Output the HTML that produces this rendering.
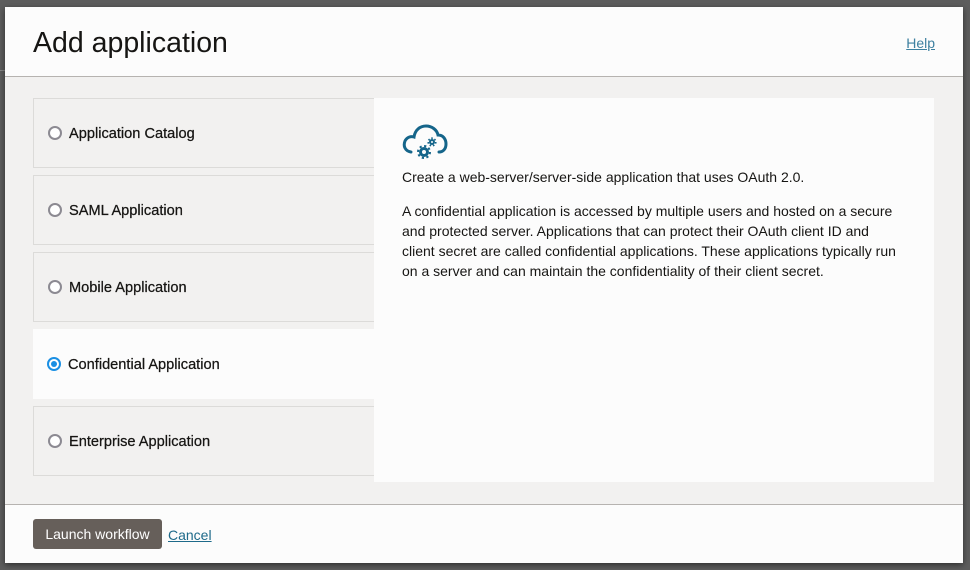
<!DOCTYPE html>
<html><head><meta charset="utf-8"><style>
*{box-sizing:border-box;margin:0;padding:0}
body{width:970px;height:570px;background:#5d5d5d;font-family:"Liberation Sans",sans-serif;position:relative;overflow:hidden;color:#161513}
.modal{position:absolute;left:5px;top:7px;width:958px;height:556px;background:#fcfcfc;box-shadow:0 2px 6px rgba(0,0,0,.5)}
.hdr{height:70px;border-bottom:1px solid #b6b3b0;position:relative}
.hdr h1{position:absolute;left:28px;top:20px;font-size:28.5px;font-weight:normal;color:#161513}
.help{position:absolute;right:28px;top:28px;font-size:14px;color:#3d80a0;text-decoration:underline}
.body{position:absolute;top:70px;left:0;width:958px;height:428px;background:#f2f1f0;border-bottom:1px solid #b6b3b0}
.item{position:absolute;left:28px;width:342px;height:70px;border:1px solid #dcdbd9;border-right:none;background:#f2f1f0;font-size:14.6px}
.item.sel{background:#fcfcfc;border-color:#fcfcfc}
.item span.r{position:absolute;left:14px;top:27px;width:14px;height:14px;border-radius:50%;border:2px solid #8c8a92;background:#fff}
.item.sel span.r{border-color:#1a8fe3;left:13px}
.item.sel span.r::after{content:"";position:absolute;left:2px;top:2px;width:6px;height:6px;border-radius:50%;background:#1a8fe3}
.item .t{position:absolute;left:35px;top:27px;-webkit-text-stroke:0.25px #161513}
.item.sel .t{left:34px}
.panel{position:absolute;left:369px;top:21px;width:560px;height:384px;background:#fcfcfc;font-size:14px;line-height:20px;color:#161513}
.ftr{position:absolute;top:498px;left:0;width:958px;height:58px}
.btn{position:absolute;left:28px;top:14px;width:129px;height:30px;background:#665f5a;border-radius:3px;color:#fff;font-size:14px;text-align:center;line-height:31px}
.cancel{position:absolute;left:163px;top:22px;font-size:14px;color:#1e6a8a;text-decoration:underline}
</style></head><body>
<div style="position:absolute;left:0;top:70px;width:5px;height:1px;background:#888"></div>
<div class="modal">
 <div class="hdr"><h1>Add application</h1><span class="help">Help</span></div>
 <div class="body">
  <div class="item" style="top:21px"><span class="r"></span><span class="t">Application Catalog</span></div>
  <div class="item" style="top:98px"><span class="r"></span><span class="t">SAML Application</span></div>
  <div class="item" style="top:175px"><span class="r"></span><span class="t">Mobile Application</span></div>
  <div class="item sel" style="top:252px"><span class="r"></span><span class="t">Confidential Application</span></div>
  <div class="item" style="top:329px"><span class="r"></span><span class="t">Enterprise Application</span></div>
  <div class="panel">
   <svg style="position:absolute;left:28px;top:24px" width="46" height="40" viewBox="0 0 46 40">
    <path d="M9 30 C3 29 1 24 3 19 C5 15 9 14 12 15 C13 8 18 4 24 4 C30 4 35 8 36 13 C41 13 44 17 44 22 C44 27 41 30 37 30" fill="none" stroke="#15658a" stroke-width="3" stroke-linecap="round"/>
    <g fill="none" stroke="#15658a"><circle cx="22" cy="30" r="3.5" stroke-width="3"/><circle cx="22" cy="30" r="6" stroke-width="2" stroke-dasharray="2.2 2.5"/>
    <circle cx="30" cy="20" r="2" stroke-width="2"/><circle cx="30" cy="20" r="3.8" stroke-width="1.6" stroke-dasharray="1.6 1.8"/></g>
   </svg>
   <p style="position:absolute;left:28px;top:69px">Create a web-server/server-side application that uses OAuth 2.0.</p>
   <p style="position:absolute;left:28px;top:103px;width:500px">A confidential application is accessed by multiple users and hosted on a secure and protected server. Applications that can protect their OAuth client ID and client secret are called confidential applications. These applications typically run on a server and can maintain the confidentiality of their client secret.</p>
  </div>
 </div>
 <div class="ftr"><div class="btn">Launch workflow</div><span class="cancel">Cancel</span></div>
</div>
</body></html>
